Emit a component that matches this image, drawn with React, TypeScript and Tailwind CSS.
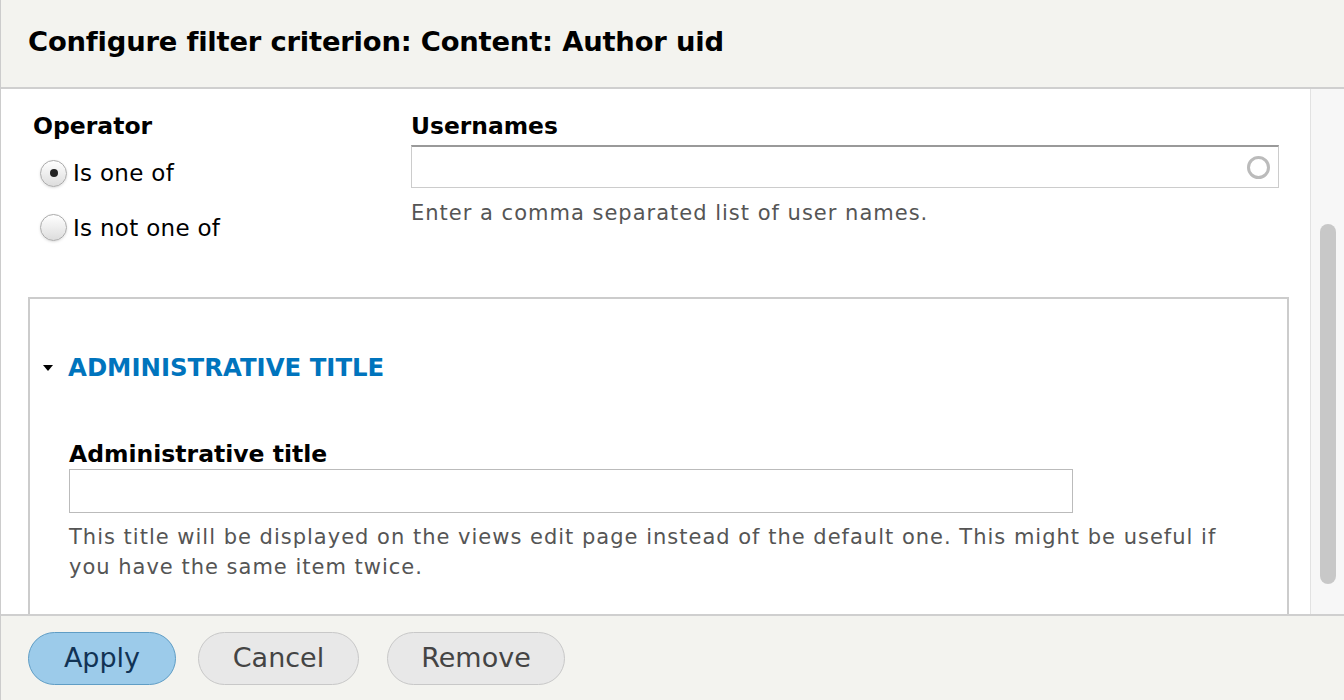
export default function App() {
  const f = { fontFamily: '"DejaVu Sans", sans-serif' };
  return (
    <div style={f} className="w-[1344px] h-[700px] flex flex-col overflow-hidden border-l border-[#ccc] text-black">
      <div className="h-[89px] shrink-0 bg-[#f3f3ef] border-b-2 border-[#cfcfcf] flex items-center pl-[27px] pb-[4px]">
        <h1 className="text-[27.4px] font-bold tracking-[-0.2px]">Configure filter criterion: Content: Author uid</h1>
      </div>
      <div className="flex-1 flex bg-white overflow-hidden">
        <div className="flex-1 flex flex-col pl-[27px] pr-[21px]">
          <div className="flex pt-[22px] h-[208px]">
            <div className="w-[383px]">
              <div className="text-[23.5px] font-bold pl-[5px] leading-[30px]">Operator</div>
              <label className="flex items-center gap-[6px] pl-[12px] mt-[15px]">
                <span className="w-[27px] h-[27px] rounded-full border border-[#aaa] bg-gradient-to-b from-white to-[#ddd] flex items-center justify-center shadow-sm">
                  <span className="w-[8px] h-[8px] rounded-full bg-[#222]" />
                </span>
                <span className="text-[23px] tracking-[0.3px]">Is one of</span>
              </label>
              <label className="flex items-center gap-[6px] pl-[12px] mt-[20px]">
                <span className="w-[27px] h-[27px] rounded-full border border-[#aaa] bg-gradient-to-b from-white to-[#ddd] shadow-sm" />
                <span className="text-[23px] tracking-[0.3px]">Is not one of</span>
              </label>
            </div>
            <div className="flex-1 pr-[10px]">
              <div className="text-[23.4px] font-bold leading-[30px]">Usernames</div>
              <div className="mt-[4px] h-[43px] border border-[#ccc] border-t-2 border-t-[#999] flex items-center justify-end pr-[8px]">
                <span className="w-[23px] h-[23px] rounded-full border-[3px] border-[#bbb]" />
              </div>
              <div className="mt-[10px] text-[21px] tracking-[1px] text-[#555]">Enter a comma separated list of user names.</div>
            </div>
          </div>
          <div className="flex-1 border-2 border-b-0 border-[#ccc] pl-[13px] pt-[51px]">
            <div className="flex items-center gap-[15px] text-[#0074bd] text-[24.4px] font-bold">
              <span className="w-0 h-0 border-l-[5px] border-r-[5px] border-t-[6px] border-l-transparent border-r-transparent border-t-black" />
              ADMINISTRATIVE TITLE
            </div>
            <div className="pl-[26px] mt-[52px]">
              <div className="text-[23.5px] font-bold leading-[30px]">Administrative title</div>
              <div className="w-[1004px] h-[44px] border border-[#bbb] mt-[0px]" />
              <div className="mt-[9px] text-[21px] tracking-[1px] text-[#555] leading-[30px] w-[1170px]">
                This title will be displayed on the views edit page instead of the default one. This might be useful if you have the same item twice.
              </div>
            </div>
          </div>
        </div>
        <div className="w-[34px] bg-[#f7f7f7] border-l border-[#e2e2e2] flex justify-center pt-[135px]">
          <div className="w-[16px] h-[360px] rounded-full bg-[#c8c8c8]" />
        </div>
      </div>
      <div className="h-[86px] shrink-0 bg-[#f3f3ef] border-t-2 border-[#cfcfcf] flex items-center gap-[22px] pl-[27px]">
        <button className="w-[148px] h-[53px] rounded-full bg-[#9ccbea] border border-[#5f9dc5] text-[27px] text-[#113355]">Apply</button>
        <button className="w-[161px] h-[53px] rounded-full bg-[#e8e8e8] border border-[#c8c8c8] text-[27px] text-[#444]">Cancel</button>
        <button className="w-[178px] h-[53px] rounded-full bg-[#e8e8e8] border border-[#c8c8c8] text-[27px] text-[#444] ml-[6px]">Remove</button>
      </div>
    </div>
  );
}
